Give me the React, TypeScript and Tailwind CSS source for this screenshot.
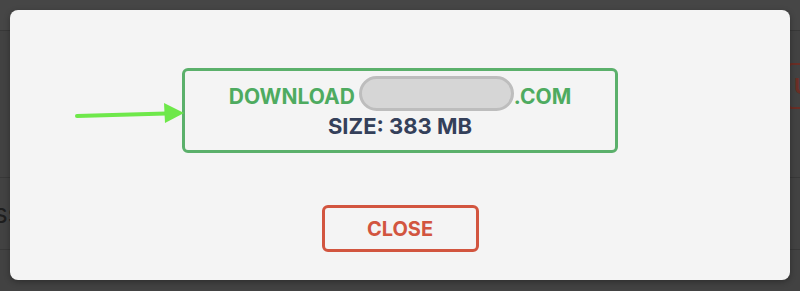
export default function App() {
  return (
    <div className="relative h-[291px] w-[800px] overflow-hidden bg-[#424242] font-['Inter','Liberation_Sans',sans-serif]">
      {/* page behind the overlay */}
      <div className="flex flex-col">
        <div className="h-[31px] border-b border-[#383838] bg-[#464646]" />
        <div className="h-[147px] border-b border-[#383838]" />
        <div className="flex h-[72px] items-center border-b border-[#383838]">
          <span className="-ml-[6px] text-[26px] text-[#1e1e1e]">ss</span>
        </div>
      </div>
      <div className="absolute right-[-32px] top-[63px] flex h-[46px] w-[44px] items-center justify-start rounded border-2 border-[#6a2e25] pl-[4px] text-[22px] font-bold text-[#6a2e25]">
        U
      </div>

      {/* modal */}
      <div className="absolute left-[10px] top-[10px] flex h-[270px] w-[780px] flex-col items-center rounded-[8px] bg-[#f4f4f4] pt-[58px] shadow-[0_2px_6px_rgba(0,0,0,0.3)]">
        <div className="flex h-[85px] w-[436px] flex-col items-center justify-center rounded-[6px] border-[3px] border-[#5bb06b]">
          <div className="relative text-[21px] font-bold leading-[26px] text-[#4eab60]">
            DOWNLOAD
            <span className="inline-block w-[159px]" />
            .COM
            <span className="absolute left-[130px] top-[-8px] h-[35px] w-[155px] rounded-full border-[3px] border-[#bdbdbd] bg-[#d6d6d6]" />
          </div>
          <div className="mt-[4px] text-[22px] font-bold leading-[24px] text-[#34405a]">SIZE: 383 MB</div>
        </div>
        <button className="mt-[52px] flex h-[47px] w-[157px] items-center justify-center rounded-[6px] border-[3px] border-[#d2553f] text-[20px] font-bold text-[#d2553f]">
          CLOSE
        </button>
      </div>

      {/* annotation arrow */}
      <svg className="absolute left-[74px] top-[100px]" width="112" height="26" viewBox="0 0 112 26">
        <line x1="3" y1="16" x2="92" y2="13.5" stroke="#6ee84a" strokeWidth="4" strokeLinecap="round" />
        <polygon points="90,3 110,13 91,23" fill="#6ee84a" />
      </svg>
    </div>
  );
}
